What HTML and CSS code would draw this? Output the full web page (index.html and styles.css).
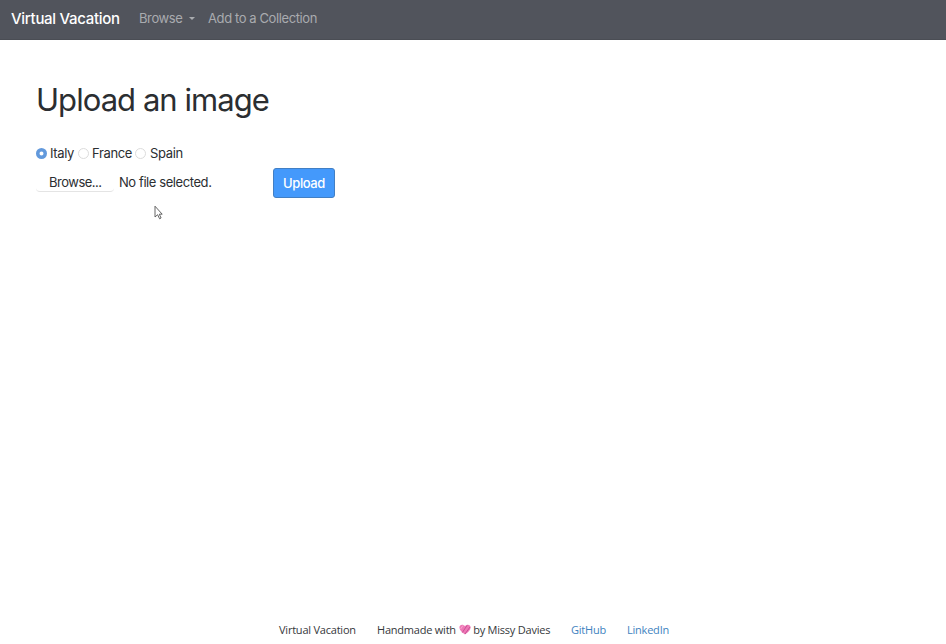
FILE: index.html
```html
<!DOCTYPE html>
<html lang="en">
<head>
<meta charset="utf-8">
<title>Virtual Vacation</title>
<link rel="stylesheet" href="styles.css">
</head>
<body>
<nav class="navbar">
  <a class="brand">Virtual Vacation</a>
  <a class="nav-link browse">Browse<span class="caret"></span></a>
  <a class="nav-link collection">Add to a Collection</a>
</nav>
<main class="content">
  <h1 class="title">Upload an image</h1>
  <div class="countries">
    <span class="radio checked"></span><span class="label italy">Italy</span>
    <span class="radio"></span><span class="label france">France</span>
    <span class="radio"></span><span class="label spain">Spain</span>
  </div>
  <div class="upload-row">
    <div class="file">
      <span class="file-button">Browse...</span>
      <span class="file-name">No file selected.</span>
    </div>
    <button class="upload">Upload</button>
  </div>
</main>
<svg class="cursor" width="10" height="16" viewBox="0 0 10 16"><path d="M1 1.2V12L3.6 9.7L5.6 13.8L7.1 13L5.3 9.2H8.2Z" fill="#fff" stroke="#555" stroke-width=".9"/></svg>
<footer class="footer">
  <span class="site">Virtual Vacation</span>
  <span class="made">Handmade with <svg class="heart" width="12" height="11" viewBox="0 0 12 11"><path d="M6 10.6C2.6 8.3.4 6 .4 3.3C.4.3 4.2-.3 6 2.2C7.8-.3 11.6.3 11.6 3.3C11.6 6 9.4 8.3 6 10.6Z" fill="#ee78b6"/><path d="M3.3 8.6L8.2 1.2M6 10L11 3" stroke="#c94f95" stroke-width="1"/><path d="M1.6 5L4 1.4" stroke="#f9a6d0" stroke-width="1"/></svg> by Missy Davies</span>
  <a class="link github">GitHub</a>
  <a class="link">LinkedIn</a>
</footer>
</body>
</html>
```
FILE: styles.css
```css
* { box-sizing: border-box; }
body {
  margin: 0;
  height: 644px;
  display: flex;
  flex-direction: column;
  overflow: hidden;
  background: #fff;
  color: #2b2e31;
  font-family: Inter, "Liberation Sans", sans-serif;
  font-size: 13px;
}
.navbar {
  height: 40px;
  flex: none;
  display: flex;
  align-items: center;
  padding: 0 12px 3px 11px;
  background: #51545c;
  border-bottom: 1px solid #4a4d54;
  white-space: nowrap;
}
.brand {
  width: 128px;
  color: #fff;
  font-size: 15px;
  font-weight: 500;
  letter-spacing: -0.3px;
}
.nav-link { color: #a9abaf; font-size: 13px; letter-spacing: -0.4px; }
.browse { width: 69px; display: flex; align-items: center; }
.caret {
  margin-left: 7px;
  border: 3.5px solid transparent;
  border-top-color: #a9abaf;
  border-bottom: 0;
}
.content { flex: 1; padding: 40px 36px 0; }
.title {
  margin: 0;
  height: 40px;
  line-height: 40px;
  font-size: 31px;
  font-weight: 430;
  letter-spacing: -0.95px;
  white-space: nowrap;
}
.countries {
  margin-top: 24px;
  height: 18px;
  display: flex;
  align-items: center;
  line-height: 18px;
  letter-spacing: -0.35px;
}
.radio {
  width: 11px;
  height: 11px;
  border: 1px solid #dcdcdc;
  border-radius: 50%;
}
.checked {
  border: none;
  background: radial-gradient(circle, #fff 1.4px, #6299dc 2.4px);
}
.label { margin-left: 3px; white-space: nowrap; }
.italy { width: 28px; }
.france { width: 43px; }
.spain { margin-left: 4px; }
.upload-row { display: flex; margin-top: 6px; }
.file { display: flex; width: 237px; height: 24px; line-height: 28px; }
.file-button {
  width: 78px;
  height: 24px;
  padding-left: 13px;
  border-bottom: 1px solid #e4e4e4;
  border-radius: 4px;
  letter-spacing: -0.5px;
}
.file-name { margin-left: 5px; white-space: nowrap; letter-spacing: -0.42px; }
.upload {
  width: 62px;
  height: 30px;
  padding: 0;
  border: 1px solid #427fc4;
  border-radius: 3px;
  background: #4499fb;
  color: #fff;
  font: 500 13px Inter, sans-serif;
  letter-spacing: -0.4px;
}
.cursor { position: absolute; left: 154px; top: 205px; }
.footer {
  height: 30px;
  display: flex;
  align-items: center;
  padding-left: 279px;
  font-family: "Open Sans", sans-serif;
  font-size: 11px;
  letter-spacing: -0.22px;
  color: #35383b;
  white-space: nowrap;
}
.site { width: 98px; }
.made { width: 194px; }
.heart { vertical-align: -1px; }
.link { color: #4183c0; }
.github { width: 56px; }
```
